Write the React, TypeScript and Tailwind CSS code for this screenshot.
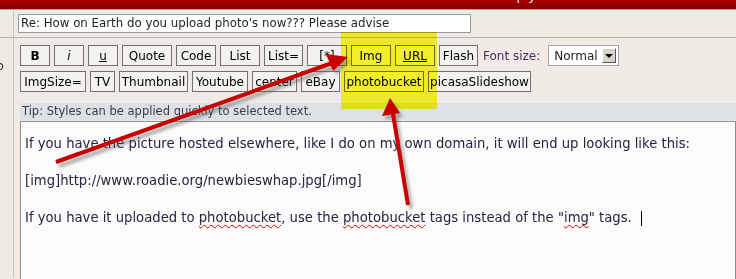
import React from 'react';

const row1: [string, number][] = [
  ['B', 30], ['i', 30], ['u', 30], ['Quote', 50], ['Code', 40], ['List', 40],
  ['List=', 39], ['[*]', 40], ['Img', 40], ['URL', 40], ['Flash', 39],
];

const row2: [string, number][] = [
  ['ImgSize=', 66], ['TV', 25], ['Thumbnail', 69], ['Youtube', 56], ['center', 45],
  ['eBay', 39], ['photobucket', 80], ['picasaSlideshow', 103],
];

const Btn = ({ label, w }: { label: string; w: number }) => {
  const extra =
    label === 'B' ? 'font-bold' : label === 'i' ? 'italic' : label === 'u' || label === 'URL' ? 'underline' : '';
  return (
    <div
      className={`h-[21px] shrink-0 flex items-center justify-center border border-[#707070] bg-[#f3f2ee] text-[12px] text-black ${extra}`}
      style={{ width: w }}
    >
      {label}
    </div>
  );
};

const Squiggle = ({ children }: { children: React.ReactNode }) => (
  <span className="underline decoration-wavy decoration-[#e00000] decoration-1 underline-offset-2">{children}</span>
);

export default function App() {
  return (
    <div className="relative w-[736px] h-[279px] overflow-hidden bg-[#efebe4] font-['DejaVu_Sans',Verdana,sans-serif]">
      {/* header bar */}
      <div className="h-[10px] bg-gradient-to-b from-[#a80000] to-[#880000] border-b border-[#a9a49b] flex justify-center overflow-hidden">
        <span className="text-white text-[13px] leading-none -mt-[11px] ml-[300px]">Reply</span>
      </div>

      {/* subject row */}
      <div className="flex h-[28px] border-b border-[#b7b3aa]">
        <div className="w-[14px] border-r border-[#c9c5bc]" />
        <div className="pl-[4px] pt-[4px]">
          <div className="w-[453px] h-[19px] border border-[#9a9a9a] bg-white text-[11.8px] text-[#1f1f1f] pl-[2px] leading-[17px] whitespace-nowrap overflow-hidden">
            Re: How on Earth do you upload photo's now??? Please advise
          </div>
        </div>
      </div>

      {/* editor row */}
      <div className="flex h-[240px]">
        <div className="w-[14px] border-r border-[#c9c5bc] overflow-hidden relative">
          <span className="absolute -left-[4px] top-[18px] text-[13px] text-[#333]">o</span>
        </div>
        <div className="flex-1 pl-[6px] pt-[7px]">
          <div className="flex items-center gap-[4px]">
            {row1.map(([l, w]) => (
              <Btn key={l} label={l} w={w} />
            ))}
            <span className="ml-[1px] text-[12px] text-[#4a2c5e]">Font size:</span>
            <div className="ml-[4px] w-[71px] h-[21px] border border-[#a5a5a5] bg-white flex items-center justify-between pl-[5px] pr-[2px]">
              <span className="text-[12px] text-[#222]">Normal</span>
              <div className="w-[14px] h-[15px] bg-[#d8d5cc] border border-t-white border-l-white border-r-[#555] border-b-[#555] flex items-center justify-center">
                <div className="w-0 h-0 border-l-[4px] border-r-[4px] border-t-[4px] border-l-transparent border-r-transparent border-t-black" />
              </div>
            </div>
          </div>
          <div className="flex items-center gap-[4px] mt-[5px]">
            {row2.map(([l, w]) => (
              <Btn key={l} label={l} w={w} />
            ))}
          </div>

          <div className="mt-[11px] h-[17px] bg-[#dde1e6] text-[11.5px] text-[#3a3a4a] pl-[2px] leading-[17px]">
            Tip: Styles can be applied quickly to selected text.
          </div>

          <div className="mt-[1px] h-[200px] border border-[#8e8e8e] bg-[#fbfbfb] pl-[4px] pt-[13px] text-[13.2px] leading-[18.6px] text-[#252540] whitespace-nowrap">
            <div>If you have the picture hosted elsewhere, like I do on my own domain, it will end up looking like this:</div>
            <div>&nbsp;</div>
            <div>[img]http://www.roadie.org/newbieswhap.jpg[/img]</div>
            <div>&nbsp;</div>
            <div>
              If you have it uploaded to <Squiggle>photobucket</Squiggle>, use the <Squiggle>photobucket</Squiggle> tags
              instead of the "<Squiggle>img</Squiggle>" tags.
              <span className="inline-block ml-[9px] w-[1px] h-[15px] bg-black align-middle" />
            </div>
          </div>
        </div>
      </div>

      {/* yellow highlight annotation */}
      <div className="absolute left-[341px] top-[32px] w-[96px] h-[77px] bg-[#fffb30] mix-blend-multiply" />

      {/* red arrows annotation */}
      <svg className="absolute inset-0 pointer-events-none" width="736" height="279">
        <defs>
          <filter id="sh" x="-20%" y="-20%" width="140%" height="140%">
            <feGaussianBlur stdDeviation="1.5" />
          </filter>
        </defs>
        <g opacity="0.45" filter="url(#sh)" transform="translate(3,4)">
          <line x1="56" y1="162" x2="332" y2="63" stroke="#555" strokeWidth="4" />
          <polygon points="348,57 326,54 333,71" fill="#555" />
          <line x1="408" y1="205" x2="393" y2="114" stroke="#555" strokeWidth="4" />
          <polygon points="390,98 382,116 400,113" fill="#555" />
        </g>
        <line x1="56" y1="162" x2="332" y2="63" stroke="#c80000" strokeWidth="4" />
        <polygon points="348,57 326,54 333,71" fill="#c80000" />
        <line x1="408" y1="205" x2="393" y2="114" stroke="#c80000" strokeWidth="4" />
        <polygon points="390,98 382,116 400,113" fill="#c80000" />
      </svg>
    </div>
  );
}
